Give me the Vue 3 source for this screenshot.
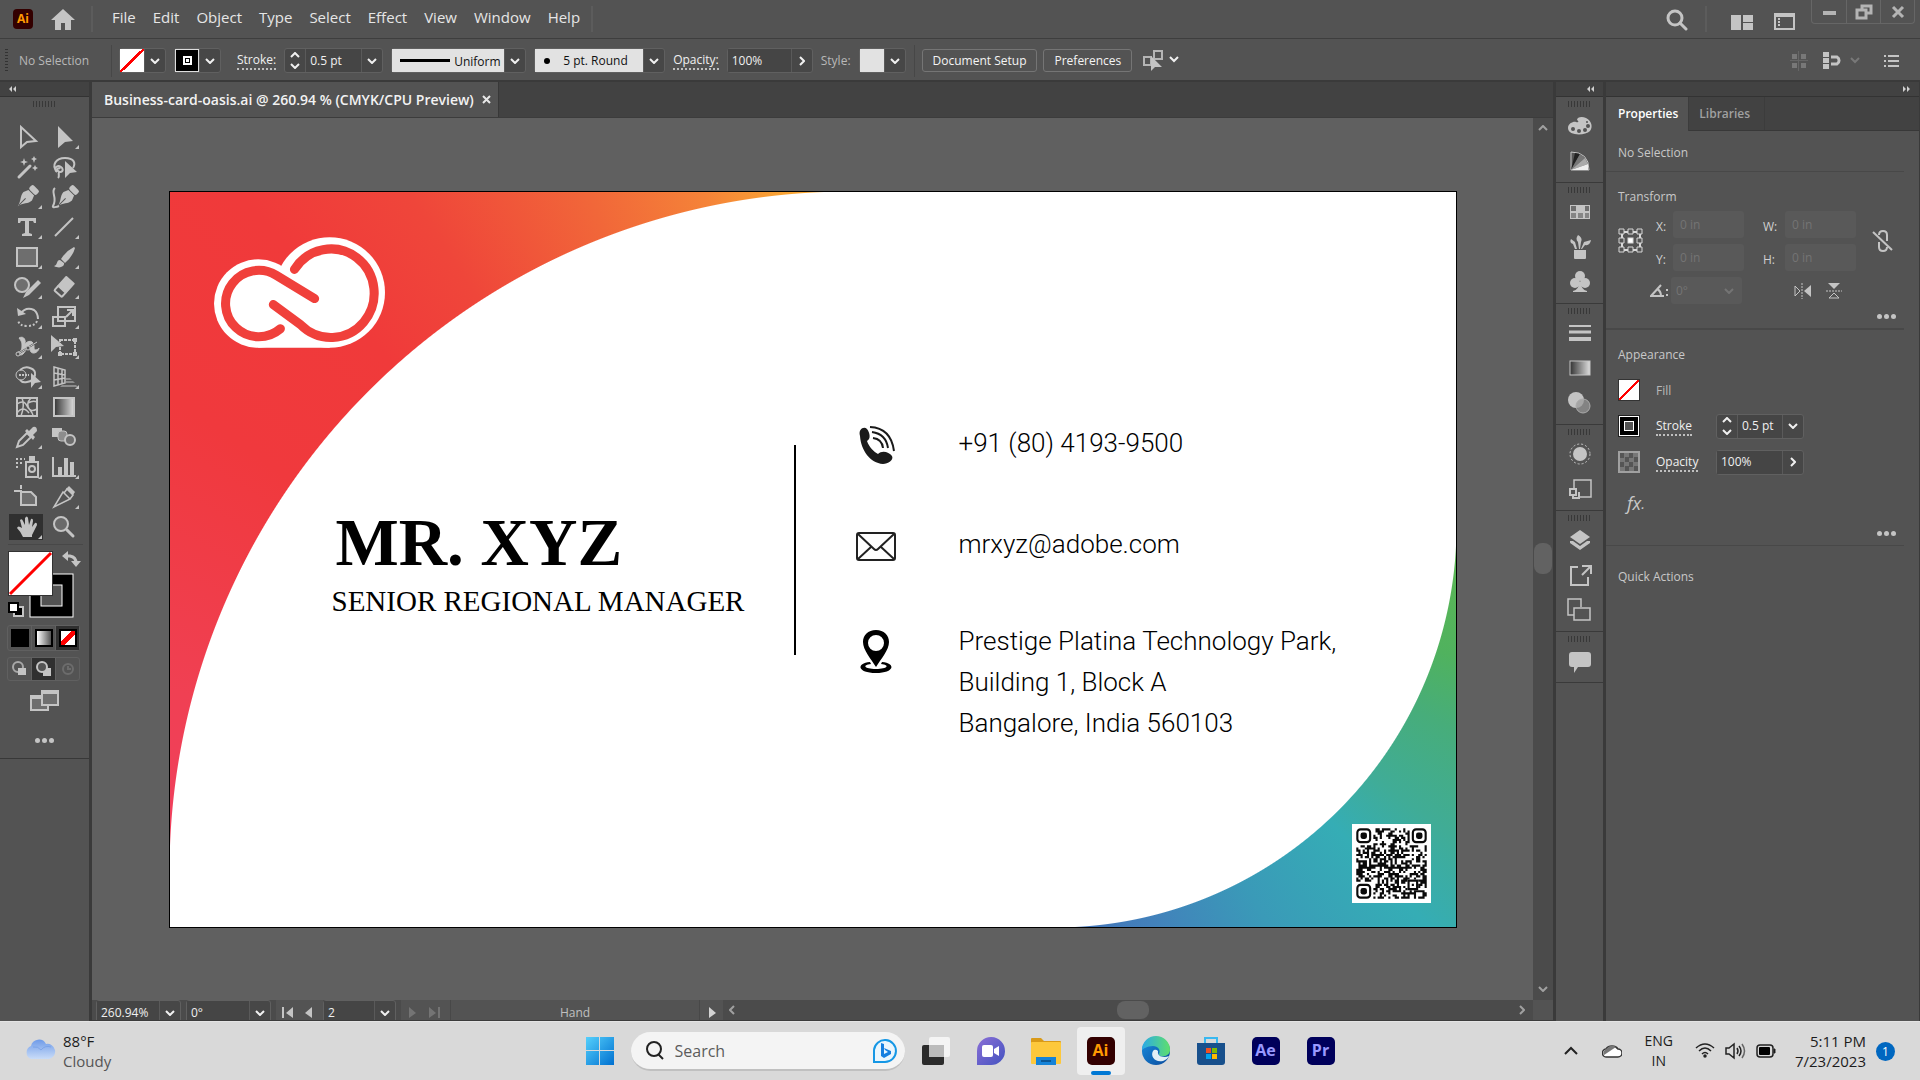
<script setup>
import { ref } from 'vue'

const menus = ['File', 'Edit', 'Object', 'Type', 'Select', 'Effect', 'View', 'Window', 'Help']

/* Tool glyphs are drawn around the origin, at the centre of a 37 x 30 cell. */
const tools = [
  { name: 'Selection', art: '<path d="M-6-10V10L0 5L9 4Z" fill="none" stroke="#c4c4c4" stroke-width="2"/>' },
  { name: 'Direct Selection', more: true, art: '<path d="M-6-11V11L1 5L9 4Z"/>' },
  { name: 'Magic Wand', art: '<path d="M-8 10L3-1" stroke="#c4c4c4" stroke-width="3" stroke-linecap="round"/><path d="M-3-9l1 3 3 1-3 1-1 3-1-3-3-1 3-1zM7-11l1 2 2 1-2 1-1 3-1-3-2-1 2-1zM8-2l1 2 2 1-2 1-1 2-1-2-2-1 2-1z"/>' },
  { name: 'Lasso', art: '<path d="M-7 5C-13-2-8-9 1-9S12-4 9 1M-7 5c-4-3 0-8 4-5s0 7-3 4c-2-2 1-4 2-2M-5 5c-1 3 1 4-1 6" fill="none" stroke="#c4c4c4" stroke-width="2"/><path d="M1-6V11L6 6L13 5Z"/>' },
  { name: 'Pen', more: true, art: '<g transform="rotate(45)"><path d="M0 13C-1 7-6 4-6-1L-4-6H4L6-1C6 4 1 7 0 13Z"/><rect x="-5" y="-13" width="10" height="6" rx="2"/><path d="M0 12V2" stroke="#535353" stroke-width="1"/></g>' },
  { name: 'Curvature', art: '<g transform="translate(3 0) rotate(45)"><path d="M0 13C-1 7-6 4-6-1L-4-6H4L6-1C6 4 1 7 0 13Z"/><rect x="-5" y="-13" width="10" height="6" rx="2"/><path d="M0 12V2" stroke="#535353"/></g><path d="M-9-9c-5 4 3 9-2 18-1 2 4 1 6 0" fill="none" stroke="#c4c4c4" stroke-width="2"/>' },
  { name: 'Type', more: true, art: '<path d="M-9-9H9V-4H7L6-6H2V6L5 7V9H-5V7L-2 6V-6H-6L-7-4H-9Z"/>' },
  { name: 'Line Segment', more: true, art: '<path d="M-9 9L9-9" stroke="#c4c4c4" stroke-width="2"/>' },
  { name: 'Rectangle', more: true, art: '<rect x="-10" y="-9" width="20" height="18" fill="#6e6e6e" stroke="#c4c4c4" stroke-width="2"/>' },
  { name: 'Paintbrush', more: true, art: '<path d="M10-10Q2-6-3 2L1 6Q9-1 11-9ZM-4 3C-8 3-6 8-10 9C-5 12 1 10 0 6Z"/>' },
  { name: 'Shaper', more: true, art: '<circle cx="-5" cy="-2" r="7" fill="#6e6e6e" stroke="#c4c4c4" stroke-width="2"/><path d="M-4 11L-1 5L11-7L14-4L2 8Z"/>' },
  { name: 'Eraser', more: true, art: '<g transform="rotate(42)"><path d="M-5-10h10a1 1 0 0 1 1 1V4H-6V-9a1 1 0 0 1 1-1Z"/><rect x="-5" y="3" width="10" height="6" rx="1" fill="#535353" stroke="#c4c4c4" stroke-width="2"/></g>' },
  { name: 'Rotate', more: true, art: '<path d="M-7-3Q-1-11 7-7Q11-4 11 2" fill="none" stroke="#c4c4c4" stroke-width="2"/><path d="M-10-9L-9-1L-1-3Z"/><path d="M10 4Q8 9 0 9T-9 3" fill="none" stroke="#c4c4c4" stroke-width="2" stroke-dasharray="2 2"/>' },
  { name: 'Scale', more: true, art: '<rect x="-6" y="-10" width="17" height="14" fill="#535353" stroke="#c4c4c4" stroke-width="2"/><rect x="-11" y="0" width="12" height="9" fill="none" stroke="#c4c4c4" stroke-width="2"/><path d="M2 0L8-6M3-7H9V-1" fill="none" stroke="#c4c4c4" stroke-width="2"/>' },
  { name: 'Width', more: true, art: '<path d="M-8-9c5-3 8 3 5 8C0-8 8-7 7 1c0 3 4 2 5 0-1 6-9 7-9 1C2-3-1 4-4 7c-2 2-6 1-5-2 3 0 4-3 4-6s0-4-3-8Z" stroke="#c4c4c4"/><path d="M-9 7L10-5" stroke="#535353" stroke-width="2"/><path d="M-9 7L10-5" stroke="#c4c4c4" stroke-width="1"/><circle cx="-9" cy="7" r="2" fill="#535353" stroke="#c4c4c4"/><circle cx="1" cy="1" r="2" fill="#535353" stroke="#c4c4c4"/>' },
  { name: 'Free Transform', more: true, art: '<rect x="-4" y="-7" width="15" height="14" fill="none" stroke="#c4c4c4" stroke-width="2" stroke-dasharray="3 1"/><path d="M-13-12V5L-8 0L0-1Z"/><path d="M9-9h4v4h-4zM9 5h4v4h-4zM-6 5h4v4h-4z"/>' },
  { name: 'Shape Builder', more: true, art: '<circle cx="-6" cy="-2" r="5" fill="none" stroke="#c4c4c4"/><path d="M-7-7Q-2-11 3-9Q9-7 8-2Q7 4 0 5Q-5 6-7 3" fill="none" stroke="#c4c4c4" stroke-width="2"/><path d="M-8-2H2" stroke="#c4c4c4" stroke-width="2" stroke-dasharray="2 1"/><path d="M4-4V11L8 6L14 5Z"/>' },
  { name: 'Perspective Grid', more: true, art: '<path d="M-10-10L1-7V6L-10 9ZM-10-4L1-2M-10 3L1 1M-6-9V8M-2-8V7" fill="none" stroke="#c4c4c4" stroke-width="1.5"/><path d="M2 1H6L8 3H2ZM2 4H9L11 6H2ZM-2 8H12L14 10H-4Z" fill="#8d8d8d"/>' },
  { name: 'Mesh', art: '<rect x="-10" y="-9" width="20" height="18" fill="none" stroke="#c4c4c4" stroke-width="2"/><path d="M-10-3Q-3-8 0-1T10 2M-10 6Q-4-2 2 6M-5-9Q-2-2-6 9M4-9Q-2-3 3 3T4 9M1-4Q6-7 10-5" fill="none" stroke="#c4c4c4" stroke-width="1.5"/>' },
  { name: 'Gradient', art: '<defs><linearGradient id="toolGrad"><stop stop-color="#333"/><stop offset="1" stop-color="#ddd"/></linearGradient></defs><rect x="-10" y="-9" width="20" height="18" fill="url(#toolGrad)" stroke="#c4c4c4" stroke-width="2"/>' },
  { name: 'Eyedropper', more: true, art: '<path d="M-10 10L-8 4L0-4L4 0L-4 8Z" fill="none" stroke="#c4c4c4" stroke-width="2"/><path d="M-2-6L0-8L2-6L6-10Q10-11 10-6L6-2L8 0L6 3Z"/>' },
  { name: 'Blend', art: '<rect x="-12" y="-9" width="10" height="9"/><rect x="-6" y="-6" width="9" height="10" rx="3" fill="#8d8d8d" stroke="#c4c4c4"/><circle cx="6" cy="3" r="5" fill="#6e6e6e" stroke="#c4c4c4" stroke-width="2"/>' },
  { name: 'Symbol Sprayer', more: true, art: '<rect x="-1" y="-5" width="12" height="15" fill="none" stroke="#c4c4c4" stroke-width="2"/><rect x="2" y="-11" width="6" height="5"/><circle cx="5" cy="2" r="3" fill="none" stroke="#c4c4c4" stroke-width="2"/><path d="M-11-8H-2M-11-4H-4M-11 0H-8" stroke="#c4c4c4" stroke-width="2" stroke-dasharray="2 2"/>' },
  { name: 'Column Graph', more: true, art: '<path d="M-11-10V9H12" fill="none" stroke="#c4c4c4" stroke-width="2"/><path d="M-6 0h4v8h-4zM0-9h4V8H0zM6-5h4V8H6z"/>' },
  { name: 'Artboard', art: '<path d="M-13-6H-5M-6-12V-8" stroke="#c4c4c4" stroke-width="2"/><path d="M-6-5H4L9 0V8H-6Z" fill="#6e6e6e" stroke="#c4c4c4" stroke-width="2"/>' },
  { name: 'Slice', more: true, art: '<path d="M-10 10L-1-5L6 2ZM0-4L3-8L9-2L6 2" fill="none" stroke="#c4c4c4" stroke-width="1.5"/><path d="M2-8L5-11L11-5L9-2Z"/>' },
  { name: 'Hand', more: true, active: true, art: '<path d="M-4 10Q-6 5-10 1Q-9-2-5 1L-7-7Q-5-9-4-6L-2-2V-9Q0-12 1-9L2-2L4-8Q6-9 6-6L5 0L8-4Q10-5 10-2L5 8V10Z"/>' },
  { name: 'Zoom', art: '<circle cx="-3" cy="-3" r="7" fill="#6a6a6a" stroke="#c4c4c4" stroke-width="2"/><path d="M3 3L9 9" stroke="#c4c4c4" stroke-width="3" stroke-linecap="round"/>' }
]

/* Panel launchers, grouped as they sit in the dock. */
const dock = [
  [
    { name: 'Color', art: '<path d="M-12 2C-12-3-6-5-4-4C-1-3-1-5-3-6C-3-9 2-10 6-8C12-5 13 1 10 5C5 10-12 10-12 2Z"/><g fill="#535353"><circle cx="-7" cy="3" r="2"/><circle cx="-1" cy="5" r="2"/><circle cx="5" cy="4" r="2"/><circle cx="8" cy="0" r="2"/><circle cx="7" cy="-4" r="1"/></g>' },
    { name: 'Color Guide', art: '<path d="M-9-9Q9-9 9 9H-9Z" fill="#555" stroke="#c4c4c4"/><path d="M-9 9L-5-8L0-7Z" fill="#222"/><path d="M-9 9L0-7L5-3Z" fill="#777"/><path d="M-9 9L5-3L8 3Z" fill="#aaa"/><path d="M-9 9L8 3V9Z" fill="#eee"/>' }
  ],
  [
    { name: 'Swatches', art: '<rect x="-10" y="-7" width="20" height="14" fill="#c4c4c4"/><path d="M-9-6h5v5h-5zM5-6h4v5H5z" fill="#6e6e6e"/><path d="M-9 1h5v5h-5zM-2 1h5v5h-5zM5 1h4v5H5z" fill="#858585"/>' },
    { name: 'Brushes', art: '<path d="M-6 3H6V11Q6 12 5 12H-5Q-6 12-6 11ZM-9-8L-5-5L-3 2H-5L-7-3Q-11-4-9-8ZM-2-12Q3-9 1-5L0 2H-1L-2-5Q-5-8-2-12ZM4-5L11-7Q10-1 5-2L2 2H1Z"/>' },
    { name: 'Symbols', art: '<circle cx="0" cy="-6" r="5"/><circle cx="-5" cy="1" r="5"/><circle cx="5" cy="1" r="5"/><path d="M-1 0H1Q1 8 7 9V10H-7V9Q-1 8-1 0Z"/>' }
  ],
  [
    { name: 'Stroke', art: '<path d="M-11-7H11" stroke="#c4c4c4" stroke-width="2"/><path d="M-11-1H11" stroke="#c4c4c4" stroke-width="3"/><path d="M-11 6H11" stroke="#c4c4c4" stroke-width="4"/>' },
    { name: 'Gradient', art: '<defs><linearGradient id="dockGrad"><stop stop-color="#333"/><stop offset="1" stop-color="#ddd"/></linearGradient></defs><rect x="-10" y="-7" width="20" height="14" fill="url(#dockGrad)" stroke="#c4c4c4"/>' },
    { name: 'Transparency', art: '<circle cx="-4" cy="-3" r="8"/><circle cx="3" cy="3" r="7" fill="#999" fill-opacity=".7" stroke="#aaa"/>' }
  ],
  [
    { name: 'Appearance', art: '<circle r="7"/><circle r="10" fill="none" stroke="#c4c4c4" stroke-dasharray="2 2"/>' },
    { name: 'Graphic Styles', art: '<path d="M-6-1V-9H11V8H0" fill="none" stroke="#c4c4c4" stroke-width="1.5"/><rect x="-10" y="0" width="6" height="6" fill="none" stroke="#c4c4c4" stroke-width="2"/><path d="M-1 3V9H-7V5" fill="none" stroke="#c4c4c4" stroke-width="2"/>' }
  ],
  [
    { name: 'Layers', art: '<path d="M0-10L10-3L0 4L-10-3Z"/><path d="M-10 1L-7 1L0 6L7 1L10 1V3L0 10L-10 3Z"/>' },
    { name: 'Asset Export', art: '<path d="M-2-8H-9V10H8V2" fill="none" stroke="#c4c4c4" stroke-width="2"/><path d="M2-9H11V-1M10-8L2 0" fill="none" stroke="#c4c4c4" stroke-width="2"/>' },
    { name: 'Artboards', art: '<path d="M-6 5H-12V-11H1V-3" fill="none" stroke="#c4c4c4" stroke-width="1.5"/><rect x="-6" y="-2" width="16" height="12" fill="none" stroke="#c4c4c4" stroke-width="1.5"/>' }
  ],
  [
    { name: 'Comments', art: '<path d="M-8-9H8Q11-9 11-6V3Q11 6 8 6H-2L-6 12V6H-8Q-11 6-11 3V-6Q-11-9-8-9Z"/>' }
  ]
]

/* QR pattern: 33 x 33 modules, the three finder corners left clear. */
const size = 33
const modules = []
let seed = 7411
for (let y = 0; y < size; y++) {
  for (let x = 0; x < size; x++) {
    seed = (seed * 1103515245 + 12345) % 2147483648
    const finder = (x < 8 && y < 8) || (x > 24 && y < 8) || (x < 8 && y > 24)
    const align = x > 23 && x < 29 && y > 23 && y < 29
    if (!finder && !align && seed / 2147483648 > 0.47) modules.push(`M${x} ${y}h1v1h-1z`)
  }
}
const qr = modules.join('')
const finders = [[0, 0], [26, 0], [0, 26]]

const strokeWeight = ref('0.5 pt')
const opacity = ref('100%')
const zoom = ref('260.94%')
const rotation = ref('0°')
const artboard = ref('2')
const scroll = { before: 385, after: 372 }
</script>

<template>
  <div class="screen">
    <header class="titlebar">
      <span class="ai-logo">Ai</span>
      <button class="plain home" aria-label="Home">
        <svg width="24" height="22" viewBox="0 0 24 22"><path d="M12 0L24 11H20V21H14V14H10V21H4V11H0Z" fill="#c4c4c4" /></svg>
      </button>
      <i class="vsep"></i>
      <nav class="menu">
        <a v-for="m in menus" :key="m" href="#">{{ m }}</a>
      </nav>
      <i class="vsep"></i>
      <div class="title-tools">
        <button class="plain" aria-label="Search">
          <svg width="22" height="22" viewBox="0 0 22 22" fill="none" stroke="#c4c4c4"><circle cx="9" cy="9" r="7" stroke-width="3" /><path d="M14 14L20 20" stroke-width="3" stroke-linecap="round" /></svg>
        </button>
        <i class="vsep"></i>
        <button class="plain" aria-label="Arrange documents">
          <svg width="22" height="20" viewBox="0 0 22 20" fill="#c4c4c4"><path d="M0 5H10V20H0ZM12 5H22V12H12ZM12 13H22V20H12Z" /></svg>
        </button>
        <button class="plain" aria-label="Workspace">
          <svg width="22" height="20" viewBox="0 0 22 20" fill="none" stroke="#c4c4c4"><rect x="1" y="4" width="19" height="15" stroke-width="2" /><path d="M1 6H20" stroke-width="2" /><path d="M5 8V17" stroke-width="2" stroke-dasharray="2 1" /></svg>
        </button>
      </div>
      <div class="window-buttons">
        <button aria-label="Minimize"><svg width="14" height="14"><path d="M1 8H14" stroke="#b4b4b4" stroke-width="4" /></svg></button>
        <button aria-label="Restore"><svg width="18" height="16" viewBox="0 0 18 16" fill="none" stroke="#b4b4b4" stroke-width="3"><path d="M7 6V2H16V9H12" /><rect x="2" y="6" width="9" height="8" /></svg></button>
        <button aria-label="Close"><svg width="14" height="14" fill="none" stroke="#b4b4b4" stroke-width="3"><path d="M2 2L12 12M12 2L2 12" /></svg></button>
      </div>
    </header>

    <section class="control">
      <i class="grip"></i>
      <span class="muted selection">No Selection</span>
      <i class="hsep"></i>
      <div class="combo">
        <button class="swatch none" aria-label="Fill"></button>
        <button class="arrow" aria-label="Fill options"><svg width="10" height="6"><path d="M1 1L5 5L9 1" /></svg></button>
      </div>
      <div class="combo">
        <button class="swatch ring" aria-label="Stroke colour"></button>
        <button class="arrow" aria-label="Stroke options"><svg width="10" height="6"><path d="M1 1L5 5L9 1" /></svg></button>
      </div>
      <label class="link stroke-label" for="cw">Stroke:</label>
      <div class="combo">
        <span class="spin"><button aria-label="Increase"><svg width="10" height="6"><path d="M1 5L5 1L9 5" /></svg></button><button aria-label="Decrease"><svg width="10" height="6"><path d="M1 1L5 5L9 1" /></svg></button></span>
        <input id="cw" v-model="strokeWeight" class="w-weight" />
        <button class="arrow" aria-label="Stroke weights"><svg width="10" height="6"><path d="M1 1L5 5L9 1" /></svg></button>
      </div>
      <div class="combo">
        <label class="light uniform"><i class="bar"></i><select aria-label="Width profile"><option>Uniform</option></select></label>
        <span class="arrow"><svg width="10" height="6"><path d="M1 1L5 5L9 1" /></svg></span>
      </div>
      <div class="combo">
        <label class="light round"><i class="dot"></i><select aria-label="Brush definition"><option>5 pt. Round</option></select></label>
        <span class="arrow"><svg width="10" height="6"><path d="M1 1L5 5L9 1" /></svg></span>
      </div>
      <label class="link" for="co">Opacity:</label>
      <div class="combo">
        <input id="co" v-model="opacity" class="w-opacity" />
        <button class="arrow" aria-label="Opacity slider"><svg width="6" height="10"><path d="M1 1L5 5L1 9" /></svg></button>
      </div>
      <span class="muted">Style:</span>
      <div class="combo">
        <button class="swatch grey" aria-label="Graphic style"></button>
        <button class="arrow" aria-label="Graphic styles"><svg width="10" height="6"><path d="M1 1L5 5L9 1" /></svg></button>
      </div>
      <i class="hsep"></i>
      <button class="outline">Document Setup</button>
      <button class="outline">Preferences</button>
      <button class="plain isolate" aria-label="Select similar">
        <svg width="40" height="26" viewBox="0 0 40 26" fill="none" stroke="#b4b4b4"><rect x="2" y="9" width="7" height="8" stroke-width="2" /><rect x="12" y="3" width="8" height="8" stroke-width="2" /><path d="M9 8V23L13 19H20Z" fill="#c4c4c4" stroke="none" /><path d="M28 9L32 13L36 9" stroke="#f0f0f0" stroke-width="2" /></svg>
      </button>
      <div class="control-right">
        <svg width="18" height="20" viewBox="0 0 18 20" fill="#787878"><path d="M2 3h5v5H2zM11 3h5v5h-5zM2 12h5v5H2zM11 12h5v5h-5z" /><path d="M0 9H18V10H0ZM8 0h1v20H8z" fill="#666" /></svg>
        <svg width="38" height="20" viewBox="0 0 38 20" fill="#c4c4c4"><path d="M0 1h6v5H0zM0 7h6v5H0zM0 13h6v5H0z" /><path d="M8 6H14A4 4 0 0 1 14 13H8" fill="none" stroke="#c4c4c4" stroke-width="3" /><path d="M28 7L32 11L36 7" fill="none" stroke="#787878" stroke-width="2" /></svg>
        <svg width="15" height="12" viewBox="0 0 15 12" stroke="#c4c4c4" stroke-width="2"><path d="M0 1H2M4 1H15M0 6H2M4 6H15M0 11H2M4 11H15" /></svg>
      </div>
    </section>

    <main class="work">
      <aside class="tools">
        <div class="panel-head"><button class="plain" aria-label="Collapse tools"><svg width="8" height="6"><path d="M3 0L0 3L3 6ZM7 0L4 3L7 6Z" fill="#d0d0d0" /></svg></button></div>
        <i class="bars tool-bars"></i>
        <div class="tool-grid">
          <button v-for="t in tools" :key="t.name" class="tool" :class="{ active: t.active }" :aria-label="t.name">
            <svg width="37" height="30" viewBox="-19 -15 37 30" fill="#c4c4c4"><g v-html="t.art"></g><path v-if="t.more" d="M15 8V12H11Z" /></svg>
          </button>
        </div>
        <div class="colors">
          <svg width="74" height="69" viewBox="0 0 74 69">
            <rect x="22" y="23" width="43" height="43" stroke="#fff" /><rect x="33" y="34" width="21" height="21" fill="#535353" stroke="#fff" />
            <rect x="0" y="0" width="45" height="45" fill="#333" /><rect x="1" y="1" width="43" height="43" fill="#fff" /><path d="M2 43L43 2" stroke="#f00" stroke-width="3" />
            <path d="M59 5H62Q68 6 68 12" fill="none" stroke="#c4c4c4" stroke-width="3" /><path d="M60 0V10L54 5ZM63 10H73L68 16Z" fill="#c4c4c4" />
            <rect x="6" y="56" width="9" height="9" fill="#000" stroke="#c4c4c4" stroke-width="2" /><rect x="1" y="52" width="9" height="9" fill="#fff" stroke="#000" stroke-width="2" />
          </svg>
        </div>
        <div class="modes">
          <button aria-label="Color"><i class="m-black"></i></button><button aria-label="Gradient"><i class="m-grad"></i></button><button class="on" aria-label="None"><i class="m-none"></i></button>
        </div>
        <div class="modes draw">
          <button aria-label="Draw Normal"><svg width="16" height="16"><circle cx="6" cy="6" r="5" fill="none" stroke="#a8a8a8" stroke-width="2" /><rect x="6" y="7" width="8" height="7" fill="#c4c4c4" /></svg></button>
          <button class="on" aria-label="Draw Behind"><svg width="16" height="16"><rect x="7" y="7" width="8" height="8" fill="#c4c4c4" /><circle cx="6" cy="6" r="5" fill="#535353" stroke="#c4c4c4" stroke-width="2" /></svg></button>
          <button aria-label="Draw Inside"><svg width="16" height="16"><circle cx="8" cy="8" r="5" fill="none" stroke="#6c6c6c" stroke-width="2" /><path d="M8 5V8H11" stroke="#6c6c6c" fill="none" stroke-width="2" /></svg></button>
        </div>
        <button class="plain screen-mode" aria-label="Screen mode"><svg width="30" height="22" viewBox="0 0 30 22" fill="#6e6e6e" stroke="#c4c4c4" stroke-width="2"><path d="M11 6H1V20H18V16M1 8H11" /><path d="M12 1H28V15H12ZM12 3H28" /></svg></button>
        <button class="plain dots left-dots" aria-label="Edit toolbar"><i></i><i></i><i></i></button>
      </aside>

      <section class="document">
        <div class="tabs"><div class="doc-tab">Business-card-oasis.ai @ 260.94 % (CMYK/CPU Preview)<button class="plain" aria-label="Close document"><svg width="9" height="9" fill="none" stroke="#e8e8e8" stroke-width="2"><path d="M1 1L8 8M8 1L1 8" /></svg></button></div></div>
        <div class="stage">
          <div class="canvas">
            <article class="card">
              <svg class="cc-logo" width="172" height="112" viewBox="0 0 171 111">
                <path d="M44 67V111H115V55Z" fill="#fff" /><circle cx="44" cy="67" r="44" fill="#fff" /><circle cx="115" cy="56" r="55" fill="#fff" />
                <g fill="none" stroke="#f0403b" stroke-width="9" stroke-linecap="round" stroke-linejoin="round"><path d="M66 92A33 33 0 1 1 62 39L100 62" /><path d="M80 33A43 44 0 1 1 86 88L59 68" /></g>
              </svg>
              <div class="card-body">
                <div class="who">
                  <h1>MR. XYZ</h1>
                  <p>SENIOR REGIONAL MANAGER</p>
                </div>
                <i class="rule"></i>
                <div class="contact">
                  <svg width="40" height="41" viewBox="0 0 40 41"><path d="M4 13C2 6 8 3 11 6C14 10 15 16 11 18C13 24 18 29 22 31C26 27 33 29 36 33C38 37 32 41 27 41C14 40 5 27 4 13Z" fill="#1a1a1a" /><path d="M17 15Q26 16 27 25M16 9Q30 11 32 25M14 4Q35 5 38 28" fill="none" stroke="#1a1a1a" stroke-width="2" /></svg>
                  <span>+91 (80) 4193-9500</span>
                  <svg width="40" height="41" viewBox="0 0 40 41" fill="none" stroke="#222" stroke-width="2"><rect x="1" y="9" width="38" height="27" rx="2" /><path d="M2 10L18 25Q20 27 22 25L38 10M2 35L15 23M38 35L25 23" /></svg>
                  <span>mrxyz@adobe.com</span>
                  <svg width="40" height="54" viewBox="0 0 40 54"><path d="M20 9C12 9 7 14 7 21C7 29 15 38 20 46C25 38 33 29 33 21C33 14 28 9 20 9ZM20 14A8 8 0 0 1 20 30A8 8 0 0 1 20 14Z" fill-rule="evenodd" /><path d="M14 41C0 42 1 52 20 52S40 42 26 41L25 43C34 44 32 48 20 48S6 44 15 43Z" /></svg>
                  <span>Prestige Platina Technology Park,<br />Building 1, Block A<br />Bangalore, India 560103</span>
                </div>
              </div>
              <svg class="qr" width="79" height="79" viewBox="-2 -2 37 37">
                <rect x="-2" y="-2" width="37" height="37" fill="#fff" />
                <path :d="qr" fill="#0a0a0a" />
                <g v-for="f in finders" :key="f.join()"><rect :x="f[0] + .5" :y="f[1] + .5" width="6" height="6" rx="1.5" fill="#fff" stroke="#0a0a0a" /><rect :x="f[0] + 2" :y="f[1] + 2" width="3" height="3" rx="1" fill="#0a0a0a" /></g>
                <path d="M24 24h5v5h-5zM25 25v3h3v-3zM26 26h1v1h-1z" fill="#0a0a0a" fill-rule="evenodd" />
              </svg>
            </article>
          </div>
          <div class="vscroll">
            <button class="plain" aria-label="Scroll up"><svg width="10" height="6"><path d="M1 5L5 1L9 5" /></svg></button>
            <i class="thumb"></i>
            <button class="plain" aria-label="Scroll down"><svg width="10" height="6"><path d="M1 1L5 5L9 1" /></svg></button>
          </div>
        </div>
        <footer class="status">
          <div class="combo"><input v-model="zoom" class="w-zoom" aria-label="Zoom level" /><button class="arrow" aria-label="Zoom levels"><svg width="10" height="6"><path d="M1 1L5 5L9 1" /></svg></button></div>
          <div class="combo"><input v-model="rotation" class="w-zoom" aria-label="Rotate view" /><button class="arrow" aria-label="Rotation angles"><svg width="10" height="6"><path d="M1 1L5 5L9 1" /></svg></button></div>
          <button class="plain nav-first" aria-label="First artboard"><svg width="12" height="11" fill="#c4c4c4"><path d="M0 0H2V11H0ZM11 0V11L4 6Z" /></svg></button>
          <button class="plain nav-prev" aria-label="Previous artboard"><svg width="8" height="11" fill="#c4c4c4"><path d="M7 0V11L0 6Z" /></svg></button>
          <div class="combo"><input v-model="artboard" class="w-board" aria-label="Artboard" /><button class="arrow" aria-label="Artboard list"><svg width="10" height="6"><path d="M1 1L5 5L9 1" /></svg></button></div>
          <button class="plain nav-next" aria-label="Next artboard"><svg width="8" height="11" fill="#747474"><path d="M0 0V11L7 6Z" /></svg></button>
          <button class="plain nav-last" aria-label="Last artboard"><svg width="12" height="11" fill="#747474"><path d="M0 0V11L7 6ZM9 0H11V11H9Z" /></svg></button>
          <span class="hint">Hand</span>
          <button class="plain nav-play" aria-label="Status options"><svg width="8" height="11" fill="#d4d4d4"><path d="M0 0V11L7 6Z" /></svg></button>
          <div class="hscroll">
            <button class="plain" aria-label="Scroll left"><svg width="6" height="10"><path d="M5 1L1 5L5 9" /></svg></button>
            <i :style="{ flexGrow: scroll.before }"></i><i class="thumb"></i><i :style="{ flexGrow: scroll.after }"></i>
            <button class="plain" aria-label="Scroll right"><svg width="6" height="10"><path d="M1 1L5 5L1 9" /></svg></button>
          </div>
        </footer>
      </section>

      <aside class="dock">
        <div class="panel-head right"><button class="plain" aria-label="Expand panels"><svg width="8" height="6"><path d="M3 0L0 3L3 6ZM7 0L4 3L7 6Z" fill="#d0d0d0" /></svg></button></div>
        <div v-for="(g, i) in dock" :key="i" class="dock-group">
          <i class="bars"></i>
          <button v-for="d in g" :key="d.name" class="plain" :aria-label="d.name"><svg width="30" height="35" viewBox="-15 -18 30 35" fill="#c4c4c4" v-html="d.art"></svg></button>
        </div>
      </aside>

      <aside class="props">
        <div class="panel-head right"><button class="plain" aria-label="Collapse panels"><svg width="8" height="6"><path d="M0 0L3 3L0 6ZM4 0L7 3L4 6Z" fill="#d0d0d0" /></svg></button></div>
        <div class="prop-tabs"><button class="current">Properties</button><button>Libraries</button></div>
        <div class="prop-section selected">No Selection</div>
        <div class="prop-section transform">
          <h2>Transform</h2>
          <div class="fields">
            <svg class="refpoint" width="26" height="26" viewBox="0 0 26 26" fill="#535353" stroke="#d8d8d8"><path d="M4 4H22V22H4Z" stroke-width="2" /><path d="M1 1h5v5H1zM10 1h5v5h-5zM19 1h5v5h-5zM1 10h5v5H1zM19 10h5v5h-5zM1 19h5v5H1zM10 19h5v5h-5zM19 19h5v5h-5z" /><rect x="10" y="10" width="5" height="5" fill="#fff" /></svg>
            <label for="fx">X:</label><input id="fx" value="0 in" disabled />
            <label for="fw" class="second">W:</label><input id="fw" value="0 in" disabled />
            <svg class="unlink" width="22" height="24" viewBox="0 0 22 24" fill="none" stroke="#c4c4c4" stroke-width="2"><path d="M7 6Q7 2 11 2T15 6V12M7 13V18Q7 22 11 22T15 18" /><path d="M1 3L20 21" /></svg>
            <label for="fy">Y:</label><input id="fy" value="0 in" disabled />
            <label for="fh" class="second">H:</label><input id="fh" value="0 in" disabled />
          </div>
          <div class="angle-row">
            <label for="fa"><svg width="20" height="14" viewBox="0 0 20 14" fill="none" stroke="#c4c4c4" stroke-width="2"><path d="M11 1L1 12H14M7 5Q11 7 11 12" /><path d="M17 5V7M17 10V12" /></svg></label>
            <div class="angle"><select id="fa" disabled><option>0°</option></select><svg width="10" height="6"><path d="M1 1L5 5L9 1" /></svg></div>
            <button class="plain" aria-label="Flip horizontally"><svg width="18" height="16" viewBox="0 0 18 16"><path d="M1 3V13L6 8Z" fill="none" stroke="#c4c4c4" /><path d="M17 2V14L10 8Z" fill="#c4c4c4" /><path d="M8 0V16" stroke="#c4c4c4" stroke-dasharray="2 1" /></svg></button>
            <button class="plain" aria-label="Flip vertically"><svg width="16" height="18" viewBox="0 0 16 18"><path d="M2 1H14L8 7Z" fill="#c4c4c4" /><path d="M3 16H13L8 11Z" fill="none" stroke="#c4c4c4" /><path d="M0 9H16" stroke="#c4c4c4" stroke-dasharray="2 1" /></svg></button>
          </div>
          <button class="plain dots" aria-label="More transform options"><i></i><i></i><i></i></button>
        </div>
        <div class="prop-section appearance">
          <h2>Appearance</h2>
          <div class="row"><button class="chip none" aria-label="Fill colour"></button><span class="muted">Fill</span></div>
          <div class="row"><button class="chip ring" aria-label="Stroke colour"></button><label class="link" for="aw">Stroke</label>
            <div class="combo">
              <span class="spin"><button aria-label="Increase"><svg width="10" height="6"><path d="M1 5L5 1L9 5" /></svg></button><button aria-label="Decrease"><svg width="10" height="6"><path d="M1 1L5 5L9 1" /></svg></button></span>
              <input id="aw" v-model="strokeWeight" /><button class="arrow" aria-label="Stroke weights"><svg width="10" height="6"><path d="M1 1L5 5L9 1" /></svg></button>
            </div>
          </div>
          <div class="row"><i class="chip checker"></i><label class="link" for="ao">Opacity</label>
            <div class="combo"><input id="ao" v-model="opacity" /><button class="arrow" aria-label="Opacity slider"><svg width="6" height="10"><path d="M1 1L5 5L1 9" /></svg></button></div>
          </div>
          <button class="plain fx">fx<small>.</small></button>
          <button class="plain dots" aria-label="More appearance options"><i></i><i></i><i></i></button>
        </div>
        <h2 class="quick">Quick Actions</h2>
      </aside>
    </main>

    <footer class="taskbar">
      <div class="weather">
        <svg width="32" height="22" viewBox="0 0 32 22"><defs><linearGradient id="cloud" x2="0" y2="1"><stop stop-color="#6f9be8" /><stop offset="1" stop-color="#c9dcf8" /></linearGradient></defs><path d="M7 21A7 7 0 0 1 7 8A8 8 0 0 1 22 6A7 7 0 0 1 25 21Z" fill="url(#cloud)" /><path d="M9 9Q14 8 17 12Q21 7 27 9" fill="none" stroke="#6d98e2" opacity=".6" /></svg>
        <div><b>88°F</b><span>Cloudy</span></div>
      </div>
      <div class="apps">
        <button class="app" aria-label="Start"><svg width="30" height="30" viewBox="0 0 30 30"><defs><linearGradient id="win" x2="1" y2="1"><stop stop-color="#55d0fc" /><stop offset="1" stop-color="#0070d0" /></linearGradient></defs><path d="M1 1H14V14H1ZM15 1H29V14H15ZM1 15H14V29H1ZM15 15H29V29H15Z" fill="url(#win)" /></svg></button>
        <label class="search">
          <svg width="20" height="20" fill="none" stroke="#222" stroke-width="2"><circle cx="9" cy="8" r="7" /><path d="M13 13L18 18" /></svg>
          <input placeholder="Search" aria-label="Search" />
          <svg width="26" height="26" viewBox="0 0 26 26"><path d="M2 24V12A11 11 0 1 1 13 24Z" fill="#eaf6fd" stroke="#1597e5" stroke-width="2" /><path d="M9 5L12 6V16L16 14L13 12L12 10L19 13V16L12 20L9 18Z" fill="#157fe0" /></svg>
        </label>
        <button class="app" aria-label="Task view"><svg width="30" height="30"><rect x="1" y="9" width="22" height="20" rx="2" fill="#2b2b2b" /><rect x="8" y="1" width="21" height="20" rx="2" fill="#f4f4f4" /><rect x="8" y="9" width="15" height="12" fill="#bbb" /></svg></button>
        <button class="app" aria-label="Chat"><svg width="30" height="30"><defs><linearGradient id="chat" x2="1" y2="1"><stop stop-color="#8b6fd6" /><stop offset="1" stop-color="#4353c0" /></linearGradient></defs><path d="M1 29V15A14 14 0 1 1 14 29Z" fill="url(#chat)" /><rect x="6" y="9" width="11" height="12" rx="2" fill="#fff" /><path d="M18 13L23 10V20L18 17Z" fill="#fff" /></svg></button>
        <button class="app" aria-label="File Explorer"><svg width="32" height="30"><path d="M1 3Q1 2 2 2H11L14 5H30Q31 5 31 6V12H1Z" fill="#d99a18" /><rect x="1" y="6" width="30" height="22" rx="1" fill="#fdc83c" /><path d="M6 21H26V29H6Z" fill="#1583d8" /><path d="M11 25H21" stroke="#0a5796" stroke-width="2" /></svg></button>
        <button class="app live" aria-label="Adobe Illustrator"><span class="tile ai">Ai</span></button>
        <button class="app" aria-label="Microsoft Edge"><svg width="30" height="30" viewBox="0 0 30 30"><defs><linearGradient id="edgeA"><stop stop-color="#2aa9e8" /><stop offset="1" stop-color="#5fdf6c" /></linearGradient><linearGradient id="edgeB" x2="1" y2="1"><stop stop-color="#1a8fe0" /><stop offset="1" stop-color="#0a4a9c" /></linearGradient></defs><circle cx="15" cy="15" r="14" fill="url(#edgeB)" /><path d="M1 14A14 14 0 0 1 29 14C29 21 18 22 18 18C20 14 17 10 12 10C6 10 2 13 1 14Z" fill="url(#edgeA)" /><path d="M12 15C9 20 14 27 22 25C25 24 27 22 28 20C23 22 16 21 17 15C15 13 13 14 12 15Z" fill="#e2eef6" /></svg></button>
        <button class="app" aria-label="Microsoft Store"><svg width="30" height="30"><path d="M9 7V2H21V7" fill="none" stroke="#38b8f0" stroke-width="2" /><path d="M1 7H29V26Q29 29 26 29H4Q1 29 1 26Z" fill="#18508c" /><path d="M10 12h5v5h-5z" fill="#f25022" /><path d="M16 12h5v5h-5z" fill="#7fba00" /><path d="M10 18h5v5h-5z" fill="#00a4ef" /><path d="M16 18h5v5h-5z" fill="#ffb900" /></svg></button>
        <button class="app" aria-label="Adobe After Effects"><span class="tile">Ae</span></button>
        <button class="app" aria-label="Adobe Premiere Pro"><span class="tile">Pr</span></button>
      </div>
      <div class="tray">
        <svg width="14" height="10" fill="none" stroke="#222" stroke-width="2"><path d="M1 8L7 2L13 8" /></svg>
        <svg class="onedrive" width="20" height="16" viewBox="0 0 20 16"><path d="M5 14A4 4 0 0 1 4 6A7 6 0 0 1 16 6A4 4 0 0 1 16 14Z" fill="#fff" stroke="#333" stroke-width="1.5" /><path d="M2 12L14 4Q9 0 4 6Q0 9 2 12Z" fill="#777" /></svg>
        <span class="lang">ENG<br />IN</span>
        <svg width="20" height="16" viewBox="0 0 20 16" fill="none" stroke="#222" stroke-width="1.5"><path d="M1 5Q10-3 19 5M4 8Q10 2 16 8M7 11Q10 8 13 11" /><circle cx="10" cy="13" r="1" fill="#222" /></svg>
        <svg width="21" height="18" viewBox="0 0 21 18" fill="none" stroke="#222" stroke-width="1.5"><path d="M1 6H4L9 2V16L4 12H1ZM12 6Q14 9 12 12M14 4Q18 9 14 14" /><path d="M17 2Q22 9 17 16" stroke="#666" /></svg>
        <svg width="20" height="14" viewBox="0 0 20 14"><rect x="1" y="1" width="16" height="12" rx="3" fill="none" stroke="#222" stroke-width="1.5" /><rect x="3" y="3" width="11" height="8" rx="1" /><path d="M18 5v4h1V5z" stroke="#222" /></svg>
        <span class="clock">5:11 PM<br />7/23/2023</span>
        <span class="badge">1</span>
      </div>
    </footer>
  </div>
</template>

<style>
html, body { margin: 0; background: #535353; }
</style>

<style scoped>
.screen { min-height: 100vh; display: flex; flex-direction: column; background: #535353; color: #c8c8c8; font: 12px/16px "Open Sans", "Noto Sans", sans-serif; overflow: hidden; }
.screen *, .screen *::before { box-sizing: border-box; }
svg { display: block; flex: none; }
button, input, select { font: inherit; color: inherit; margin: 0; padding: 0; border: 0; background: none; border-radius: 0; min-width: 0; }
select { appearance: none; opacity: 1; }
h1, h2, p { margin: 0; font-weight: 400; }
h2 { font-size: 12px; line-height: 16px; }
.plain { display: flex; align-items: center; }
.muted { color: #b8b8b8; }

.titlebar { display: flex; align-items: flex-start; height: 39px; border-bottom: 1px solid #3e3e3e; }
.ai-logo { width: 20px; height: 20px; margin: 9px 18px 0 13px; border-radius: 4px; background: #330000; color: #ff9a00; font-weight: 700; font-size: 12px; line-height: 19px; text-align: center; }
.home { margin: 9px 16px 0 0; }
.vsep { width: 2px; height: 26px; margin-top: 6px; background: #5c5c5c; }
.menu { display: flex; gap: 17px; padding: 7px 11px 0 19px; }
.menu a { color: #e6e6e6; text-decoration: none; font-size: 15px; line-height: 20px; }
.title-tools { display: flex; gap: 21px; margin-left: auto; padding-right: 15px; }
.title-tools .plain { margin-top: 8px; }
.title-tools .vsep { margin-left: -4px; margin-right: 3px; }
.window-buttons { display: flex; height: 24px; margin-right: 5px; border: 1px solid #666; border-top: 0; border-radius: 0 0 4px 4px; }
.window-buttons button { width: 34px; display: flex; align-items: center; justify-content: center; }
.window-buttons button + button { border-left: 1px solid #666; }

.control { display: flex; align-items: center; gap: 8px; height: 43px; padding-top: 2px; border-bottom: 2px solid #3a3a3a; white-space: nowrap; }
.grip { width: 3px; height: 24px; margin: 0 3px 0 5px; background: repeating-linear-gradient(#333 0 1px, #535353 1px 3px); }
.selection { width: 84px; }
.hsep { width: 1px; height: 32px; background: #474747; margin-right: -1px; }
.combo { display: flex; height: 25px; border: 1px solid #606060; border-radius: 3px; background: #474747; color: #f0f0f0; }
.combo input { padding-left: 4px; background: #454545; }
.combo svg path, .hscroll path, .vscroll path { fill: none; stroke: #f0f0f0; stroke-width: 2; }
.arrow { width: 21px; display: flex; align-items: center; justify-content: center; border-left: 1px solid #5a5a5a; }
.swatch { width: 24px; }
.none { background: linear-gradient(to top left, transparent 46%, #f00 46%, #f00 54%, transparent 54%) #fff; }
.swatch.ring { border: 1px solid #ddd; background: linear-gradient(#fff, #fff) center/3px 3px no-repeat, linear-gradient(#000, #000) center/5px 5px no-repeat, linear-gradient(#fff, #fff) center/9px 9px no-repeat, #000; }
.grey { background: #e2e2e2; }
.link { color: #f0f0f0; line-height: 16px; border-bottom: 2px dotted #c0c0c0; }
.stroke-label { margin-left: 8px; }
.spin { width: 21px; display: flex; flex-direction: column; align-items: center; justify-content: space-around; border-right: 1px solid #5a5a5a; }
.spin button { display: flex; }
.w-weight { width: 55px; }
.w-opacity { width: 63px; }
.light { display: flex; align-items: center; background: #e2e2e2; color: #111; }
.light select { flex: 1; }
.uniform { width: 112px; padding: 3px 2px 0 8px; }
.uniform .bar { width: 50px; height: 3px; margin: 0 4px 4px 0; background: #000; }
.round { width: 108px; padding: 0 4px 0 9px; }
.round .dot { width: 6px; height: 6px; margin-right: 13px; border-radius: 50%; background: #000; }
.outline { height: 23px; padding: 0 10px; border: 1px solid #757575; border-radius: 3px; color: #f4f4f4; margin-right: -2px; }
.isolate { margin-left: 4px; }
.control-right { display: flex; align-items: center; gap: 15px; margin-left: auto; padding-right: 21px; }
.control-right svg:last-child { margin-left: 8px; }

.work { flex: 1; display: grid; grid-template-columns: 92px minmax(0, 1fr) 50px 317px; }
.work > * { min-width: 0; }
.panel-head { height: 15px; display: flex; align-items: center; padding-left: 9px; background: #424242; border-bottom: 1px solid #333; }
.panel-head.right { justify-content: flex-end; padding-right: 8px; }
.bars { display: block; width: 24px; height: 6px; background: repeating-linear-gradient(90deg, #383838 0 1px, #535353 1px 3px); }

.tools { border-right: 3px solid #3a3a3a; }
.tool-bars { margin: 4px auto 15px 33px; }
.tool-grid { display: grid; grid-template-columns: 37px 37px; grid-auto-rows: 30px; margin-left: 8px; padding-bottom: 2px; border-bottom: 1px solid #484848; width: 75px; }
.tool.active { background: linear-gradient(#303030, #303030) 1px 2px/34px 26px no-repeat; }
.colors { margin: 6px 0 5px 8px; }
.modes { display: flex; width: 73px; height: 26px; margin: 0 0 6px 7px; border: 1px solid #606060; border-radius: 3px; }
.modes button { flex: 1; display: flex; align-items: center; justify-content: center; }
.modes button + button { border-left: 1px solid #606060; }
.modes .on { background: #303030; }
.modes i { width: 18px; height: 18px; border: 2px solid #000; }
.m-black { background: #000; }
.m-grad { background: linear-gradient(90deg, #fff, #555); }
.m-none { background: linear-gradient(to top left, transparent 38%, #f00 38%, #f00 62%, transparent 62%) #fff; }
.modes.draw { height: 24px; margin-bottom: 9px; }
.screen-mode { margin-left: 30px; }
.dots { gap: 2px; }
.dots i { width: 5px; height: 5px; border-radius: 50%; background: #c4c4c4; }
.left-dots { margin-left: 35px; padding: 26px 0 15px; }
.tools::after { content: ""; display: block; border-top: 1px solid #383838; }

.document { display: flex; flex-direction: column; }
.tabs { display: flex; height: 36px; background: #424242; border-bottom: 1px solid #3c3c3c; }
.doc-tab { display: flex; align-items: center; gap: 8px; padding: 0 7px 0 12px; background: #535353; color: #f2f2f2; font-weight: 600; font-size: 14px; border-right: 1px solid #383838; white-space: nowrap; }
.stage { flex: 1; display: flex; }
.canvas { flex: 1; display: flex; align-items: center; justify-content: center; background: #606060; }
.vscroll { width: 20px; display: flex; flex-direction: column; align-items: center; justify-content: space-between; padding: 7px 0 8px; background: #4b4b4b; }
.vscroll path, .hscroll path { stroke: #a0a0a0; }
.vscroll .thumb { width: 18px; height: 31px; border-radius: 8px; background: #626262; }

.card {
  display: flex; flex-direction: column; width: 1288px; height: 737px; flex: none; padding: 44px 25px 24px 44px; border: 1px solid #000; color: #000;
  background:
    radial-gradient(circle at 680px 680px, #fff 680px, transparent 681px) 0 0/680px 680px no-repeat,
    radial-gradient(circle at 0 0, #fff 401px, transparent 402px) 100% 100%/401px 401px no-repeat,
    conic-gradient(from 270deg at 100% 100%, #f04060 0deg, #f04053 15deg, #f0393d 35deg, #f03a3a 48deg, #ef463a 57deg, #f16739 69deg, #f58338 78deg, #f9a234 84deg, #fbb030 90deg) 0 0/680px 680px no-repeat,
    conic-gradient(from 90deg at 0 0, #60b852 0deg, #50b25e 18deg, #47ad7a 27deg, #40ac96 38deg, #35adb5 47deg, #3a9ab8 62deg, #4281bb 76deg, #4470b8 90deg) 100% 100%/401px 401px no-repeat,
    #fff;
}
.card-body { display: flex; align-items: flex-start; margin-top: 75px; }
.who { width: 462px; margin: 86px 0 0 118px; white-space: nowrap; }
.who h1, .who p { font-family: "Liberation Serif", "Times New Roman", serif; }
.who h1 { padding-left: 4px; font-weight: 700; font-size: 67px; line-height: 66px; }
.who p { margin-top: 10px; font-size: 29px; line-height: 32px; }
.rule { width: 2px; height: 210px; margin: 22px 60px 0 0; background: #000; }
.contact { display: grid; grid-template-columns: 103px auto; grid-template-rows: 101px 97px auto; font: 300 26px/41px Roboto, "Liberation Sans", sans-serif; white-space: nowrap; }
.qr { margin: auto 0 0 auto; }

.status { display: flex; height: 21px; padding-left: 4px; border-bottom: 1px solid #3c3c3c; overflow: hidden; background: #4b4b4b; }
.status > .combo { height: 26px; margin-right: 5px; background: #474747; }
.status > .plain { height: 25px; background: #535353; }
.w-zoom { width: 62px; }
.w-board { width: 50px; }
.nav-first { padding: 0 6px; }
.nav-prev { padding: 0 10px 0 5px; }
.nav-next { padding: 0 12px 0 8px; }
.nav-last { padding-right: 9px; }
.hint { width: 250px; line-height: 26px; text-align: center; background: #535353; border: solid #484848; border-width: 0 1px; color: #c0c0c0; }
.nav-play { padding: 0 6px 0 9px; }
.hscroll { flex: 1; display: flex; align-items: center; padding: 0 8px 0 6px; border-right: 20px solid #535353; background: #4b4b4b; }
.hscroll .thumb { width: 32px; height: 18px; border-radius: 8px; background: #626262; }

.dock { border-left: 3px solid #3a3a3a; }
.dock-group { padding: 4px 0; border-bottom: 1px solid #3a3a3a; }
.dock-group .bars { margin: 0 auto 1px 12px; }
.dock-group .plain { margin-left: 9px; }

.props { border: solid #3a3a3a; border-width: 0 1px 0 3px; }
.prop-tabs { display: flex; height: 34px; background: #424242; border-bottom: 1px solid #383838; }
.prop-tabs button { padding: 0 14px 0 10px; color: #a0a0a0; font-weight: 600; border-right: 1px solid #3c3c3c; }
.prop-tabs .current { height: 34px; padding: 0 10px 0 12px; background: #535353; color: #fff; }
.prop-section { margin-right: 15px; padding-left: 12px; border-bottom: 1px solid #484848; }
.selected { height: 41px; padding-top: 14px; }
.transform { height: 158px; padding-top: 17px; display: flex; flex-direction: column; border-width: 2px; }
.fields { display: grid; grid-template-columns: 38px 17px 71px 41px 71px 1fr; grid-template-rows: 27px 27px; row-gap: 6px; align-items: center; margin-top: 6px; }
.refpoint { grid-row: 1 / 3; }
.unlink { grid-column: 6; grid-row: 1 / 3; justify-self: end; margin-right: 10px; }
.fields label { color: #d0d0d0; padding-top: 4px; }
.fields .second { padding-left: 19px; }
.fields input, .angle { width: 71px; height: 27px; padding-left: 7px; border-radius: 3px; background: #595959; color: #747474; }
.angle-row { display: flex; align-items: center; margin-top: 6px; padding-left: 32px; gap: 14px; }
.angle-row label { margin-right: -13px; }
.angle { display: flex; align-items: center; justify-content: space-between; padding: 0 8px 0 5px; margin-right: 38px; }
.angle path { fill: none; stroke: #747474; stroke-width: 2; }
.prop-section .dots { margin: auto 8px 9px auto; }
.appearance { height: 216px; padding-top: 17px; display: flex; flex-direction: column; }
.row { display: flex; align-items: center; height: 36px; }
.appearance h2 + .row { margin-top: 9px; }
.row .chip + * { margin-left: 16px; padding-top: 2px; }
.row .combo { margin-left: auto; margin-right: 100px; width: 88px; }
.row .combo input { flex: 1; width: 0; }
.chip { width: 22px; height: 22px; border: 1px solid #888; }
.chip.none { border-color: #333; }
.chip.ring { border-color: #222; background: linear-gradient(#535353, #535353) center/8px 8px no-repeat, linear-gradient(#fff, #fff) center/10px 10px no-repeat, linear-gradient(#000, #000) center/18px 18px no-repeat, #fff; }
.checker { border: 2px solid #a0a0a0; background: conic-gradient(#777 25%, #555 0 50%, #777 0 75%, #555 0) 0 0/9px 9px; }
.fx { margin: 13px 0 0 9px; font: italic 18px/20px "Open Sans", sans-serif; }
.quick { padding: 23px 12px; }

.taskbar { display: grid; grid-template-columns: 1fr auto 1fr; align-items: center; height: 59px; background: #d9d9d9; color: #1c1c1c; font-size: 15px; line-height: 20px; border-top: 1px solid #e4e4e4; }
.weather { display: flex; align-items: center; gap: 7px; padding-left: 24px; }
.weather svg { margin-top: -4px; }
.weather b, .weather span { display: block; font-weight: 400; }
.weather span { color: #555; }
.apps { display: flex; align-items: center; gap: 7px; }
.app { width: 48px; height: 48px; display: flex; align-items: center; justify-content: center; }
.app:first-child, .app:last-child { width: 30px; }
.app:last-child { margin-left: 9px; }
.search { width: 274px; height: 39px; display: flex; align-items: center; gap: 10px; margin-left: 9px; padding: 2px 7px 0 14px; border-radius: 20px; background: #f4f4f4; border-bottom: 2px solid #c0c0c0; }
.search input { flex: 1; font-size: 16px; color: #555; outline: 0; }
.search input::placeholder { color: #5c5c5c; opacity: 1; }
.live { position: relative; background: #efefef; border-radius: 4px; }
.live::before { content: ""; position: absolute; bottom: 0; width: 20px; height: 4px; border-radius: 2px; background: #0078d4; }
.tile { width: 28px; height: 28px; border-radius: 5px; background: #00005b; color: #9999ff; font-weight: 700; font-size: 16px; line-height: 26px; }
.tile.ai { background: #330000; color: #ff9a00; }
.tray { display: flex; align-items: center; justify-content: flex-end; padding-right: 25px; gap: 10px; }
.onedrive { margin: 0 12px 0 14px; }
.lang { text-align: center; margin-right: 12px; font-size: 14px; }
.clock { text-align: right; margin-left: 9px; }
.badge { width: 19px; height: 19px; border-radius: 50%; background: #0067c0; color: #fff; font-size: 12px; line-height: 19px; text-align: center; }
</style>
